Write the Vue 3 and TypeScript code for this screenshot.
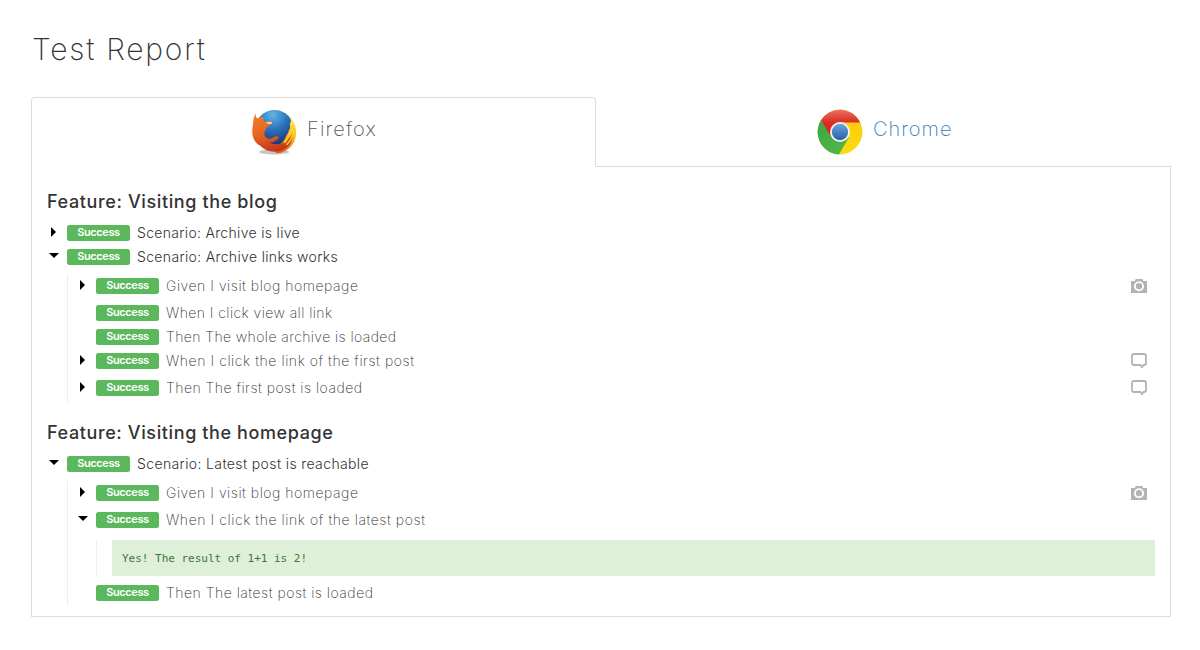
<script setup lang="ts">
type Kind = 'camera' | 'comment'
interface Step {
  text: string
  w: number
  state?: 'closed' | 'open'
  icon?: Kind
  output?: string
}
interface Scenario {
  text: string
  w: number
  state: 'closed' | 'open'
  steps: Step[]
}
interface Feature {
  title: string
  w: number
  scenarios: Scenario[]
}

const features: Feature[] = [
  {
    title: 'Feature: Visiting the blog',
    w: 230,
    scenarios: [
      { text: 'Scenario: Archive is live', w: 162.5, state: 'closed', steps: [] },
      {
        text: 'Scenario: Archive links works',
        w: 200.5,
        state: 'open',
        steps: [
          { text: 'Given I visit blog homepage', w: 192, state: 'closed', icon: 'camera' },
          { text: 'When I click view all link', w: 166 },
          { text: 'Then The whole archive is loaded', w: 230 },
          { text: 'When I click the link of the first post', w: 248, state: 'closed', icon: 'comment' },
          { text: 'Then The first post is loaded', w: 196, state: 'closed', icon: 'comment' },
        ],
      },
    ],
  },
  {
    title: 'Feature: Visiting the homepage',
    w: 286,
    scenarios: [
      {
        text: 'Scenario: Latest post is reachable',
        w: 231.5,
        state: 'open',
        steps: [
          { text: 'Given I visit blog homepage', w: 192, state: 'closed', icon: 'camera' },
          {
            text: 'When I click the link of the latest post',
            w: 259,
            state: 'open',
            output: 'Yes! The result of 1+1 is 2!',
          },
          { text: 'Then The latest post is loaded', w: 207 },
        ],
      },
    ],
  },
]

const vTrack = {
  mounted(el: HTMLElement, binding: { value: number }) {
    const n = (el.textContent ?? '').length
    el.style.letterSpacing = '0px'
    const natural = el.getBoundingClientRect().width
    el.style.letterSpacing = `${(binding.value + 0.5 - natural) / n}px`
  },
}
</script>

<template>
  <main class="page">
    <h1><span v-track="174">Test Report</span></h1>
    <nav class="tabs">
      <a class="tab active">
        <svg class="logo" viewBox="0 0 46 46">
          <defs>
            <radialGradient id="globe" cx=".45" cy=".12" r=".8">
              <stop offset="0" stop-color="#62b4e2" />
              <stop offset=".5" stop-color="#2a70b8" />
              <stop offset="1" stop-color="#163274" />
            </radialGradient>
            <linearGradient id="fox" x1=".2" y1="0" x2=".5" y2="1">
              <stop offset="0" stop-color="#ef7f25" />
              <stop offset=".5" stop-color="#e8641f" />
              <stop offset="1" stop-color="#c2381b" />
            </linearGradient>
            <linearGradient id="tail" x1=".6" y1="0" x2=".4" y2="1">
              <stop offset="0" stop-color="#fff08a" />
              <stop offset=".45" stop-color="#fbc51c" />
              <stop offset="1" stop-color="#e45b1d" />
            </linearGradient>
          </defs>
          <ellipse cx="23" cy="43" rx="15" ry="2.4" fill="#c9c5c3" />
          <circle cx="23.5" cy="20.5" r="19.5" fill="url(#globe)" />
          <path fill="url(#tail)" d="M37.500 6C43 11 46 18 45 26c-1 10-9 18-20 18.500l-2-7c6-1 10-5 12-10 1.500-3 3-4 3-8l.8 2c1-4 1-6 .2-9l1 1c0-3-1-5-2.500-7.500z" />
          <path fill="url(#fox)" d="M4.500 4.500c0 2 .5 3.500 1.500 5 2-1 5-1.500 6.500-.8-.5 1.800 0 3 1.500 4.300l5-.2c2 0 2.500 1 1.500 2.200l-5 3.300-1 3c-2 2.500-1.500 5.500 1 7.500 2.500 1.500 5 1 7-.5s4-1.500 5.500.2c-.5 1.500-2 2.500-4 3.500-2 1.300-4 1.700-6 1.500 6 3 14 2 18-2.500 3-3.500 5-5 6-7.500 0 8-3 14-9 17-8 4-18 2.500-24-4C1.500 33 0 23 2 16c0-5 1-8 2.500-11.500z" />
          <path fill="#f8d0a4" d="M14.500 13.200l4.500-.4c2 0 2.500 1 1.500 2.200-2 .2-4.500-.2-6-1.800z" />
          <path fill="none" stroke="#fbcf27" stroke-width="1.400" d="M39.500 14c1 7-1 14-6 20M42.500 16c1 8-2 15-7 20" />
        </svg>
        <span v-track="69.500">Firefox</span>
      </a>
      <a class="tab">
        <svg class="logo" viewBox="0 0 46 46">
          <defs>
            <linearGradient id="red" x1="0" y1="0" x2="0" y2="1">
              <stop offset="0" stop-color="#ec6f61" />
              <stop offset=".5" stop-color="#dc2a24" />
              <stop offset="1" stop-color="#d9201c" />
            </linearGradient>
            <linearGradient id="green" x1="0" y1="0" x2="1" y2="1">
              <stop offset="0" stop-color="#3aa847" />
              <stop offset="1" stop-color="#55b848" />
            </linearGradient>
            <linearGradient id="yellow" x1="0" y1="0" x2="0" y2="1">
              <stop offset="0" stop-color="#fbc60c" />
              <stop offset="1" stop-color="#ffdb14" />
            </linearGradient>
            <linearGradient id="blue" x1="0" y1="0" x2="0" y2="1">
              <stop offset="0" stop-color="#70a5dc" />
              <stop offset="1" stop-color="#2360a8" />
            </linearGradient>
          </defs>
          <circle cx="23" cy="23" r="22.400" fill="url(#yellow)" />
          <path fill="url(#green)" d="M4 11.200A22.400 22.400 0 0 0 22 45.400L32 28 14 27z" />
          <path fill="url(#red)" d="M4 11.200A22.400 22.400 0 0 1 43.300 13.600H23L13.500 27z" />
          <circle cx="23" cy="23" r="10" fill="#f4f5f3" />
          <circle cx="23" cy="23" r="8.200" fill="url(#blue)" />
        </svg>
        <span v-track="79">Chrome</span>
      </a>
    </nav>
    <div class="panel">
      <section v-for="f in features" :key="f.title" class="feature">
        <h2><span v-track="f.w">{{ f.title }}</span></h2>
        <div v-for="s in f.scenarios" :key="s.text">
          <div class="row scenario">
            <i class="caret" :class="s.state"></i>
            <span class="badge"><span v-track="42">Success</span></span>
            <span v-track="s.w" class="label">{{ s.text }}</span>
          </div>
          <div v-if="s.steps.length" class="steps">
            <template v-for="t in s.steps" :key="t.text">
              <div class="row" :class="{ tall: t.state }">
                <i class="caret" :class="t.state"></i>
                <span class="badge"><span v-track="42">Success</span></span>
                <span v-track="t.w" class="label">{{ t.text }}</span>
                <svg v-if="t.icon === 'camera'" class="icon" viewBox="0 0 16 16">
                  <path fill="#b3b3b3" d="M0 3h4V2l1-1h6l1 1v1h4v12H0z" />
                  <circle cx="8" cy="8.200" r="4.100" fill="#b3b3b3" stroke="#fff" stroke-width="1.900" />
                </svg>
                <svg v-else-if="t.icon === 'comment'" class="icon" viewBox="0 0 16 16">
                  <path fill="none" stroke="#b3b3b3" stroke-width="1.800" stroke-linejoin="round" d="M3 1h10Q15 1 15 3v7Q15 12 13 12H12.500L11 14.300 9.500 12H3Q1 12 1 10v-7Q1 1 3 1z" />
                </svg>
              </div>
              <div v-if="t.output" class="detail">
                <pre><span v-track="184.500">{{ t.output }}</span></pre>
              </div>
            </template>
          </div>
        </div>
      </section>
    </div>
  </main>
</template>

<style>
body {
  margin: 0;
  background: #fff;
}
</style>

<style scoped>
.page {
  box-sizing: border-box;
  width: 1200px;
  height: 650px;
  padding: 30px 29px 0 31px;
  font-family: Inter, "Liberation Sans", sans-serif;
  color: #333;
}
.page span {
  white-space: nowrap;
}
h1 {
  margin: 0 0 29px 1px;
  height: 38px;
  line-height: 38px;
  font-size: 30px;
  font-weight: 200;
}
.tabs {
  display: flex;
  height: 70px;
}
.tab {
  box-sizing: border-box;
  display: flex;
  flex: 0 0 575px;
  height: 70px;
  padding: 12px 0 0 221px;
  gap: 10px;
  border-bottom: 1px solid #ddd;
  color: #337ab7;
  font-size: 20px;
  font-weight: 200;
  line-height: 40px;
}
.tab.active {
  flex-basis: 565px;
  padding: 11px 0 0 219px;
  border: 1px solid #ddd;
  border-bottom: 0;
  border-radius: 4px 4px 0 0;
  color: #555;
}
.logo {
  flex: none;
  width: 46px;
  height: 46px;
}
.panel {
  box-sizing: border-box;
  height: 450px;
  padding: 24px 15px 0;
  border: solid #ddd;
  border-width: 0 1px 1px;
}
.feature + .feature {
  margin-top: 19px;
}
h2 {
  margin: 0 0 9px;
  height: 21px;
  line-height: 21px;
  font-size: 18px;
  font-weight: 500;
}
.row {
  display: flex;
  height: 24px;
}
.row.tall {
  height: 27px;
}
.caret {
  flex: none;
  width: 20px;
}
.caret::before {
  content: "";
  display: block;
  width: 0;
  height: 0;
  border: 5px solid transparent;
}
.caret.closed::before {
  margin: 6px 0 0 4px;
  border-left-color: #000;
  border-right: 0;
}
.caret.open::before {
  margin: 8px 0 0 2px;
  border-top-color: #000;
  border-bottom: 0;
}
.badge {
  flex: none;
  width: 63px;
  height: 16px;
  margin: 4px 7px 0 0;
  border-radius: 2.500px;
  background: #5cb85c;
  color: #fff;
  font-size: 11px;
  font-weight: 600;
  line-height: 15px;
  text-align: center;
}
.label {
  align-self: flex-start;
  line-height: 24px;
  font-size: 14px;
  font-weight: 200;
  color: #333;
}
.scenario .label {
  font-weight: 350;
  color: #333;
}
.steps {
  margin: 5px 0 0 20px;
  padding-left: 8px;
  border-left: 1px solid #eee;
}
.icon {
  width: 16px;
  height: 16px;
  margin: 4px 8px 0 auto;
}
.detail {
  margin: 5px 0 5px 20px;
  padding-left: 15px;
  border-left: 1px solid #eee;
}
pre {
  margin: 0;
  padding: 0 10px;
  height: 36px;
  line-height: 37px;
  background: #dff0d8;
  color: #3c763d;
  font-family: "DejaVu Sans Mono", monospace;
  font-size: 11px;
}
</style>
